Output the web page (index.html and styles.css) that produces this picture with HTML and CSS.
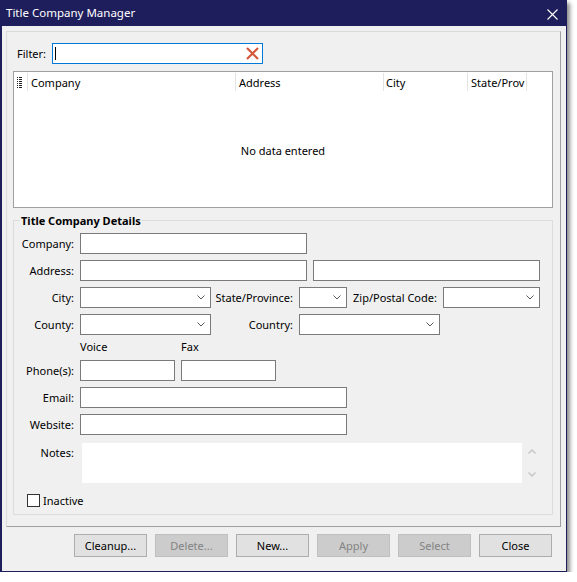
FILE: index.html
```html
<!DOCTYPE html>
<html>
<head>
<meta charset="utf-8">
<title>Title Company Manager</title>
<link rel="stylesheet" href="styles.css">
</head>
<body>
<div class="window">
  <div class="titlebar">
    <span class="title">Title Company Manager</span>
    <svg class="close-x" width="11" height="11" viewBox="0 0 11 11"><path d="M0.5 0.5L10.5 10.5M10.5 0.5L0.5 10.5" stroke="#ffffff" stroke-width="1.1" fill="none"/></svg>
  </div>
  <div class="client">
    <div class="panel">
      <div class="filter-row">
        <span class="filter-label">Filter:</span>
        <div class="filter-box">
          <span class="caret"></span>
          <svg class="clear-x" width="13" height="13" viewBox="0 0 13 13"><path d="M1 1L12 12M12 1L1 12" stroke="#d5573a" stroke-width="2.2" fill="none"/></svg>
        </div>
      </div>
      <div class="grid">
        <div class="grid-head">
          <div class="hcell c0">
            <svg width="6" height="12" viewBox="0 0 6 12">
              <g fill="#222">
                <rect x="0" y="0" width="1" height="1"/><rect x="2" y="0" width="3" height="1"/>
                <rect x="0" y="2" width="1" height="1"/><rect x="2" y="2" width="3" height="1"/>
                <rect x="0" y="4" width="1" height="1"/><rect x="2" y="4" width="3" height="1"/>
                <rect x="0" y="6" width="1" height="1"/><rect x="2" y="6" width="3" height="1"/>
                <rect x="0" y="8" width="1" height="1"/><rect x="2" y="8" width="3" height="1"/>
                <rect x="0" y="10" width="1" height="1"/><rect x="2" y="10" width="3" height="1"/>
              </g>
            </svg>
          </div>
          <div class="hcell c1">Company</div>
          <div class="hcell c2">Address</div>
          <div class="hcell c3">City</div>
          <div class="hcell c4">State/Prov</div>
        </div>
        <div class="grid-body">No data entered</div>
      </div>
      <fieldset class="group">
        <legend>Title Company Details</legend>
        <div class="rows">
          <div class="row">
            <span class="lbl">Company:</span>
            <div class="tb w227"></div>
          </div>
          <div class="row">
            <span class="lbl">Address:</span>
            <div class="tb w227"></div>
            <div class="tb w227 gap-l"></div>
          </div>
          <div class="row">
            <span class="lbl">City:</span>
            <div class="combo w131"><svg class="chev" width="8" height="5" viewBox="0 0 8 5"><path d="M0.5 0.5L4 4L7.5 0.5" stroke="#5a5a5a" fill="none"/></svg></div>
            <span class="lbl2">State/Province:</span>
            <div class="combo w48"><svg class="chev" width="8" height="5" viewBox="0 0 8 5"><path d="M0.5 0.5L4 4L7.5 0.5" stroke="#5a5a5a" fill="none"/></svg></div>
            <span class="lbl3">Zip/Postal Code:</span>
            <div class="combo w97"><svg class="chev" width="8" height="5" viewBox="0 0 8 5"><path d="M0.5 0.5L4 4L7.5 0.5" stroke="#5a5a5a" fill="none"/></svg></div>
          </div>
          <div class="row">
            <span class="lbl">County:</span>
            <div class="combo w131"><svg class="chev" width="8" height="5" viewBox="0 0 8 5"><path d="M0.5 0.5L4 4L7.5 0.5" stroke="#5a5a5a" fill="none"/></svg></div>
            <span class="lbl2">Country:</span>
            <div class="combo w141"><svg class="chev" width="8" height="5" viewBox="0 0 8 5"><path d="M0.5 0.5L4 4L7.5 0.5" stroke="#5a5a5a" fill="none"/></svg></div>
          </div>
          <div class="subhead">
            <span class="sub-voice">Voice</span>
            <span>Fax</span>
          </div>
          <div class="row">
            <span class="lbl">Phone(s):</span>
            <div class="tb w95"></div>
            <div class="tb w95 gap-l"></div>
          </div>
          <div class="row">
            <span class="lbl">Email:</span>
            <div class="tb w267"></div>
          </div>
          <div class="row">
            <span class="lbl">Website:</span>
            <div class="tb w267"></div>
          </div>
          <div class="row notes-row">
            <span class="lbl">Notes:</span>
            <div class="notes"></div>
            <div class="notes-scroll">
              <svg width="8" height="5" viewBox="0 0 8 5"><path d="M0.5 4.5L4 1L7.5 4.5" stroke="#c4c4c4" stroke-width="1.4" fill="none"/></svg>
              <svg width="8" height="5" viewBox="0 0 8 5"><path d="M0.5 0.5L4 4L7.5 0.5" stroke="#c4c4c4" stroke-width="1.4" fill="none"/></svg>
            </div>
          </div>
          <div class="check-row">
            <span class="checkbox"></span>
            <span class="check-label">Inactive</span>
          </div>
        </div>
      </fieldset>
    </div>
    <div class="buttons">
      <button class="btn">Cleanup...</button>
      <button class="btn disabled">Delete...</button>
      <button class="btn">New...</button>
      <button class="btn disabled">Apply</button>
      <button class="btn disabled">Select</button>
      <button class="btn">Close</button>
    </div>
  </div>
</div>
</body>
</html>
```

FILE: styles.css
```css
* {
  box-sizing: border-box;
}

html, body {
  margin: 0;
  padding: 0;
  background: #ffffff;
}

body {
  font-family: "Noto Sans", "Open Sans", sans-serif;
  font-size: 11px;
  color: #000000;
}

.window {
  width: 567px;
  height: 572px;
  border: 1px solid #1f1e5c;
  border-top: 0;
  border-left-width: 2px;
  background: #f0f0f0;
  box-shadow: 3px 3px 4px rgba(0, 0, 0, 0.45);
  display: flex;
  flex-direction: column;
}

.titlebar {
  height: 26px;
  background: #1f1e5c;
  color: #ffffff;
  display: flex;
  align-items: center;
  justify-content: space-between;
  margin-left: -2px;
  margin-right: -1px;
  padding: 0 9px 0 6px;
}

.title {
  font-size: 11.5px;
  line-height: 26px;
}

.close-x {
  display: block;
  margin-top: 2px;
}

.client {
  flex: 1;
  padding: 5px 5px 0 4px;
  display: flex;
  flex-direction: column;
}

.panel {
  height: 496px;
  border: 1px solid;
  border-color: #dadada #a0a0a0 #a0a0a0 #dadada;
  padding: 11px 7px 0 6px;
}

.filter-row {
  display: flex;
  align-items: center;
  height: 21px;
}

.filter-label {
  margin-left: 4px;
  width: 35px;
}

.filter-box {
  width: 211px;
  height: 21px;
  border: 1px solid #0078d7;
  background: #ffffff;
  display: flex;
  align-items: center;
  justify-content: space-between;
  padding: 0 3px 0 2px;
}

.caret {
  width: 1px;
  height: 13px;
  background: #000000;
}

.clear-x {
  display: block;
}

.grid {
  margin-top: 7px;
  width: 540px;
  height: 137px;
  border: 1px solid #a0a0a0;
  background: #ffffff;
  display: flex;
  flex-direction: column;
}

.grid-head {
  display: flex;
  height: 22px;
  padding-top: 1px;
}

.hcell {
  height: 18px;
  border-right: 1px solid #e3e3e3;
  padding-left: 3px;
  line-height: 20px;
  white-space: nowrap;
  overflow: hidden;
}

.c0 {
  width: 14px;
  padding-top: 4px;
}

.c0 svg {
  display: block;
}

.c1 { width: 208px; }
.c2 { width: 148px; }
.c3 { width: 84px; padding-left: 2px; }
.c4 { width: 59px; }

.grid-body {
  flex: 1;
  display: flex;
  align-items: center;
  justify-content: center;
}

.group {
  margin: 5px 0 0 0;
  width: 540px;
  border: 1px solid #dcdcdc;
  padding: 5px 0 7px 0;
  min-width: 0;
}

.group legend {
  font-weight: bold;
  line-height: 15px;
  padding: 0 1px;
  margin-left: 6px;
}

.rows {
  display: flex;
  flex-direction: column;
  gap: 6px;
}

.row {
  display: flex;
  align-items: center;
  height: 21px;
}

.lbl {
  width: 60px;
  margin-right: 6px;
  text-align: right;
  white-space: nowrap;
}

.lbl2 {
  width: 82px;
  margin-right: 6px;
  text-align: right;
  white-space: nowrap;
}

.lbl3 {
  width: 84px;
  margin-left: 6px;
  margin-right: 6px;
  white-space: nowrap;
}

.tb, .combo {
  height: 21px;
  border: 1px solid #7a7a7a;
  background: #ffffff;
}

.combo {
  display: flex;
  align-items: center;
  justify-content: flex-end;
  padding-right: 5px;
}

.chev {
  display: block;
}

.gap-l { margin-left: 6px; }

.w227 { width: 227px; }
.w131 { width: 131px; }
.w48 { width: 48px; }
.w97 { width: 97px; }
.w141 { width: 141px; }
.w95 { width: 95px; }
.w267 { width: 267px; }

.subhead {
  height: 15px;
  margin-top: -2px;
  line-height: 15px;
  padding-left: 66px;
  display: flex;
}

.sub-voice {
  width: 101px;
}

.notes-row {
  height: 40px;
  align-items: flex-start;
  margin-top: 2px;
}

.notes-row .lbl {
  line-height: 19px;
}

.notes {
  margin-left: 2px;
  width: 440px;
  height: 40px;
  background: #ffffff;
}

.notes-scroll {
  width: 18px;
  height: 40px;
  display: flex;
  flex-direction: column;
  align-items: center;
  justify-content: space-between;
  padding: 6px 0 6px 1px;
}

.notes-scroll svg {
  display: block;
}

.check-row {
  display: flex;
  align-items: center;
  height: 13px;
  margin-top: 5px;
  padding-left: 13px;
}

.checkbox {
  width: 13px;
  height: 13px;
  border: 1px solid #333333;
  background: #ffffff;
}

.check-label {
  margin-left: 3px;
  line-height: 13px;
}

.buttons {
  margin-top: 7px;
  margin-right: 9px;
  display: flex;
  justify-content: flex-end;
  gap: 8px;
}

.btn {
  width: 73px;
  height: 23px;
  border: 1px solid #adadad;
  background: #e1e1e1;
  font-family: "Noto Sans", "Open Sans", sans-serif;
  font-size: 11px;
  color: #000000;
  padding: 0;
  margin: 0;
  border-radius: 0;
}

.btn.disabled {
  background: #cccccc;
  border-color: #bfbfbf;
  color: #838383;
}
```
